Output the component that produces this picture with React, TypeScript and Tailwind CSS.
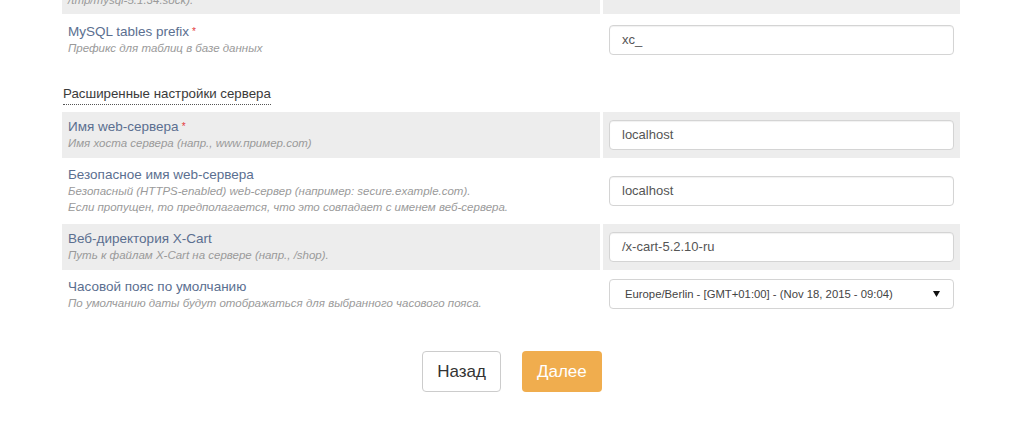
import React from "react";

type Row = {
  label: string;
  required?: boolean;
  desc: string[];
  value: string;
  select?: boolean;
  gray?: boolean;
};

const topRows: Row[] = [
  {
    label: "MySQL socket",
    desc: ["Сокет MySQL (например:", "/tmp/mysql-5.1.34.sock)."],
    value: "",
    gray: true,
  },
  {
    label: "MySQL tables prefix",
    required: true,
    desc: ["Префикс для таблиц в базе данных"],
    value: "xc_",
  },
];

const serverRows: Row[] = [
  {
    label: "Имя web-сервера",
    required: true,
    desc: ["Имя хоста сервера (напр., www.пример.com)"],
    value: "localhost",
    gray: true,
  },
  {
    label: "Безопасное имя web-сервера",
    desc: [
      "Безопасный (HTTPS-enabled) web-сервер (например: secure.example.com).",
      "Если пропущен, то предполагается, что это совпадает с именем веб-сервера.",
    ],
    value: "localhost",
  },
  {
    label: "Веб-директория X-Cart",
    desc: ["Путь к файлам X-Cart на сервере (напр., /shop)."],
    value: "/x-cart-5.2.10-ru",
    gray: true,
  },
  {
    label: "Часовой пояс по умолчанию",
    desc: ["По умолчанию даты будут отображаться для выбранного часового пояса."],
    value: "Europe/Berlin - [GMT+01:00] - (Nov 18, 2015 - 09:04)",
    select: true,
  },
];

function FieldRow({ row, hideInput }: { row: Row; hideInput?: boolean }) {
  const bg = row.gray ? "bg-[#ededed]" : "bg-white";
  return (
    <div className="grid grid-cols-[538px_357px] gap-x-[3px]">
      <div className={`${bg} flex flex-col justify-center px-[6px] py-[6px]`}>
        <div className="text-[13.5px] leading-[16px] text-[#5b6f90]">
          {row.label}
          {row.required && (
            <span className="ml-[3px] align-top text-[10px] text-[#e4393c]">*</span>
          )}
        </div>
        {row.desc.map((d) => (
          <div key={d} className="text-[11.5px] italic leading-[16px] text-[#9a9a9a]">
            {d}
          </div>
        ))}
      </div>
      <div className={`${bg} flex items-center px-[6px] py-[8px]`}>
        {!hideInput &&
          (row.select ? (
            <div className="-mt-[2px] flex h-[30px] w-[345px] items-center justify-between rounded-[4px] border border-[#d4d4d4] bg-white pl-[15px] pr-[13px] text-[11.3px] text-[#444]">
              <span>{row.value}</span>
              <svg width="7" height="6" viewBox="0 0 7 6">
                <path d="M0 0h7L3.5 6z" fill="#111" />
              </svg>
            </div>
          ) : (
            <div className="flex h-[30px] w-[345px] items-center rounded-[4px] border border-[#d4d4d4] bg-white px-[12px] text-[13px] text-[#555] shadow-[inset_0_1px_1px_rgba(0,0,0,0.06)]">
              {row.value}
            </div>
          ))}
      </div>
    </div>
  );
}

export default function App() {
  return (
    <div className="h-[422px] overflow-hidden bg-white font-['Liberation_Sans',Arial,sans-serif]">
      <div className="ml-[62px] w-[898px] -mt-[46px]">
        <div className="flex flex-col gap-y-[3px]">
          <FieldRow row={topRows[0]} hideInput />
          <FieldRow row={topRows[1]} />
        </div>

        <div className="mt-[18px] mb-[7px]">
          <span className="ml-[1px] inline-block border-b border-dotted border-[#555] text-[13.3px] leading-[20px] text-[#3a3a3a]">
            Расширенные настройки сервера
          </span>
        </div>

        <div className="flex flex-col gap-y-[3px]">
          {serverRows.map((r) => (
            <FieldRow key={r.label} row={r} />
          ))}
        </div>
      </div>

      <div className="mt-[34px] flex justify-center gap-x-[21px]">
        <button className="h-[41px] rounded-[4px] border border-[#ccc] bg-white px-[14px] text-[17px] text-[#333]">
          Назад
        </button>
        <button className="h-[41px] rounded-[4px] bg-[#f0ad4e] px-[15px] text-[17px] text-white">
          Далее
        </button>
      </div>
    </div>
  );
}
